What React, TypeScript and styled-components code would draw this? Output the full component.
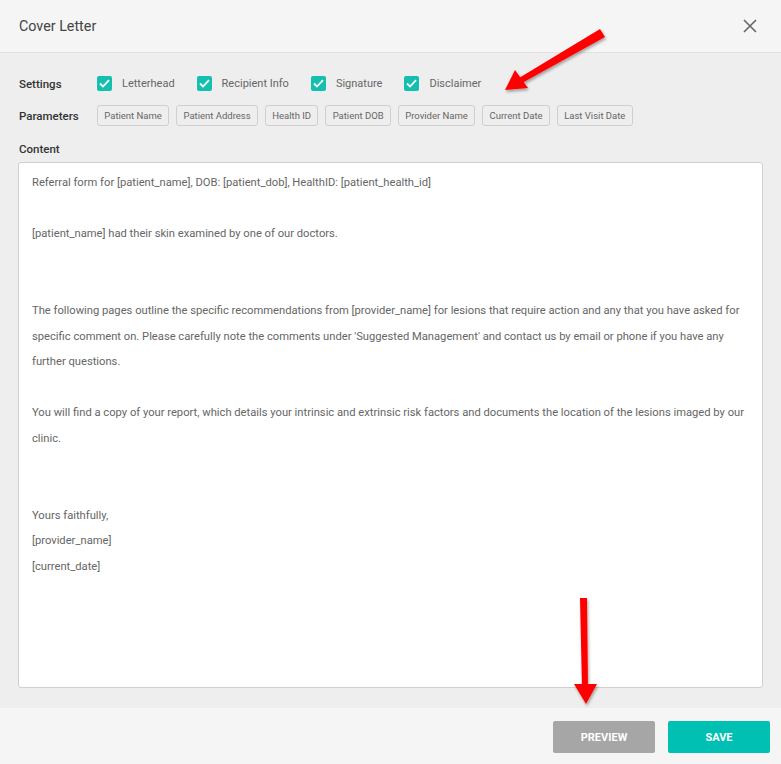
import React from "react";
import styled, { createGlobalStyle } from "styled-components";

const GlobalStyle = createGlobalStyle`
  html, body {
    margin: 0;
    padding: 0;
    background: #eeeeee;
    font-family: Roboto, "Liberation Sans", sans-serif;
  }
`;

const settings = ["Letterhead", "Recipient Info", "Signature", "Disclaimer"];
const params = [
  "Patient Name",
  "Patient Address",
  "Health ID",
  "Patient DOB",
  "Provider Name",
  "Current Date",
  "Last Visit Date",
];

const lines = [
  "Referral form for [patient_name], DOB: [patient_dob], HealthID: [patient_health_id]",
  "",
  "[patient_name] had their skin examined by one of our doctors.",
  "",
  "",
  "The following pages outline the specific recommendations from [provider_name] for lesions that require action and any that you have asked for",
  "specific comment on. Please carefully note the comments under 'Suggested Management' and contact us by email or phone if you have any",
  "further questions.",
  "",
  "You will find a copy of your report, which details your intrinsic and extrinsic risk factors and documents the location of the lesions imaged by our",
  "clinic.",
  "",
  "",
  "Yours faithfully,",
  "[provider_name]",
  "[current_date]",
];

export default function App() {
  return (
    <>
      <GlobalStyle />
      <Modal>
        <Header>
          <Title>Cover Letter</Title>
          <CloseButton aria-label="close">
            <svg width="14" height="14" viewBox="0 0 14 14">
              <path d="M1 1 L13 13 M13 1 L1 13" stroke="#666" strokeWidth="1.6" />
            </svg>
          </CloseButton>
        </Header>
        <Body>
          <Row>
            <Label>Settings</Label>
            <CheckGroup>
              {settings.map((s) => (
                <CheckItem key={s}>
                  <Box>
                    <svg width="11" height="9" viewBox="0 0 11 9">
                      <path d="M1 4.5 L4 7.5 L10 1.2" fill="none" stroke="#fff" strokeWidth="1.8" />
                    </svg>
                  </Box>
                  {s}
                </CheckItem>
              ))}
            </CheckGroup>
          </Row>
          <Row $top={14}>
            <Label>Parameters</Label>
            <Chips>
              {params.map((p) => (
                <Chip key={p}>{p}</Chip>
              ))}
            </Chips>
          </Row>
          <Label as="div" style={{ marginTop: 16 }}>Content</Label>
          <Editor>
            {lines.map((l, i) => (
              <Line key={i}>{l || "\u00a0"}</Line>
            ))}
          </Editor>
        </Body>
        <Footer>
          <Button $kind="grey">Preview</Button>
          <Button $kind="teal">Save</Button>
        </Footer>
        <Arrow width="781" height="764" viewBox="0 0 781 764">
          <defs>
            <filter id="sh" x="-20%" y="-20%" width="140%" height="140%">
              <feDropShadow dx="1" dy="2" stdDeviation="1.5" floodColor="#000" floodOpacity="0.35" />
            </filter>
          </defs>
          <g filter="url(#sh)" fill="#ff0000">
            <polygon points="600,29 605,37 522,83 519,78" />
            <polygon points="505,90 515,70 528,88" />
            <polygon points="580,598 587,598 588,688 582,688" />
            <polygon points="574,684 597,684 586,704" />
          </g>
        </Arrow>
      </Modal>
    </>
  );
}

const Modal = styled.div`
  position: relative;
  width: 781px;
  height: 764px;
  display: flex;
  flex-direction: column;
  background: #eeeeee;
  overflow: hidden;
`;

const Header = styled.div`
  height: 53px;
  flex: none;
  background: #f5f5f5;
  border-bottom: 1px solid #e2e2e2;
  display: flex;
  align-items: center;
  justify-content: space-between;
  padding: 0 19px;
  box-sizing: border-box;
`;

const Title = styled.h2`
  margin: 0;
  font-size: 14.3px;
  font-weight: 400;
  color: #444;
`;

const CloseButton = styled.button`
  border: none;
  background: none;
  padding: 0;
  margin-right: 5px;
  display: flex;
  cursor: pointer;
`;

const Body = styled.div`
  flex: 1;
  padding: 23px 18px 20px 18px;
  display: flex;
  flex-direction: column;
  min-height: 0;
`;

const Row = styled.div<{ $top?: number }>`
  display: flex;
  align-items: center;
  margin-top: ${(p) => p.$top ?? 0}px;
`;

const Label = styled.span`
  width: 78px;
  flex: none;
  padding-left: 1px;
  font-size: 11.5px;
  font-weight: 500;
  color: #333;
`;

const CheckGroup = styled.div`
  display: flex;
  align-items: center;
  gap: 22px;
`;

const CheckItem = styled.label`
  display: flex;
  align-items: center;
  gap: 10px;
  font-size: 11px;
  color: #666;
`;

const Box = styled.span`
  width: 15px;
  height: 15px;
  border-radius: 2px;
  background: #14bfb0;
  display: flex;
  align-items: center;
  justify-content: center;
`;

const Chips = styled.div`
  display: flex;
  gap: 7px;
`;

const Chip = styled.span`
  height: 21px;
  box-sizing: border-box;
  padding: 0 6.3px;
  border: 1px solid #cfcfcf;
  border-radius: 3px;
  display: flex;
  align-items: center;
  font-size: 9.5px;
  color: #666;
`;

const Editor = styled.div`
  flex: 1;
  margin-top: 6px;
  background: #fff;
  border: 1px solid #cfcfcf;
  border-radius: 3px;
  padding: 7px 13px;
  overflow: hidden;
`;

const Line = styled.div`
  font-size: 11.2px;
  line-height: 25.6px;
  color: #666;
  white-space: nowrap;
`;

const Footer = styled.div`
  height: 56px;
  flex: none;
  background: #f5f5f5;
  display: flex;
  align-items: center;
  justify-content: flex-end;
  gap: 13px;
  padding: 2px 11px 0 0;
  box-sizing: border-box;
`;

const Button = styled.button<{ $kind: "grey" | "teal" }>`
  width: 102px;
  height: 32px;
  border: none;
  border-radius: 2px;
  background: ${(p) => (p.$kind === "teal" ? "#00bfb3" : "#a6a6a6")};
  color: #fff;
  font-family: Roboto, "Liberation Sans", sans-serif;
  font-size: 11px;
  font-weight: 700;
  text-transform: uppercase;
  cursor: pointer;
`;

const Arrow = styled.svg`
  position: absolute;
  left: 0;
  top: 0;
  pointer-events: none;
`;
